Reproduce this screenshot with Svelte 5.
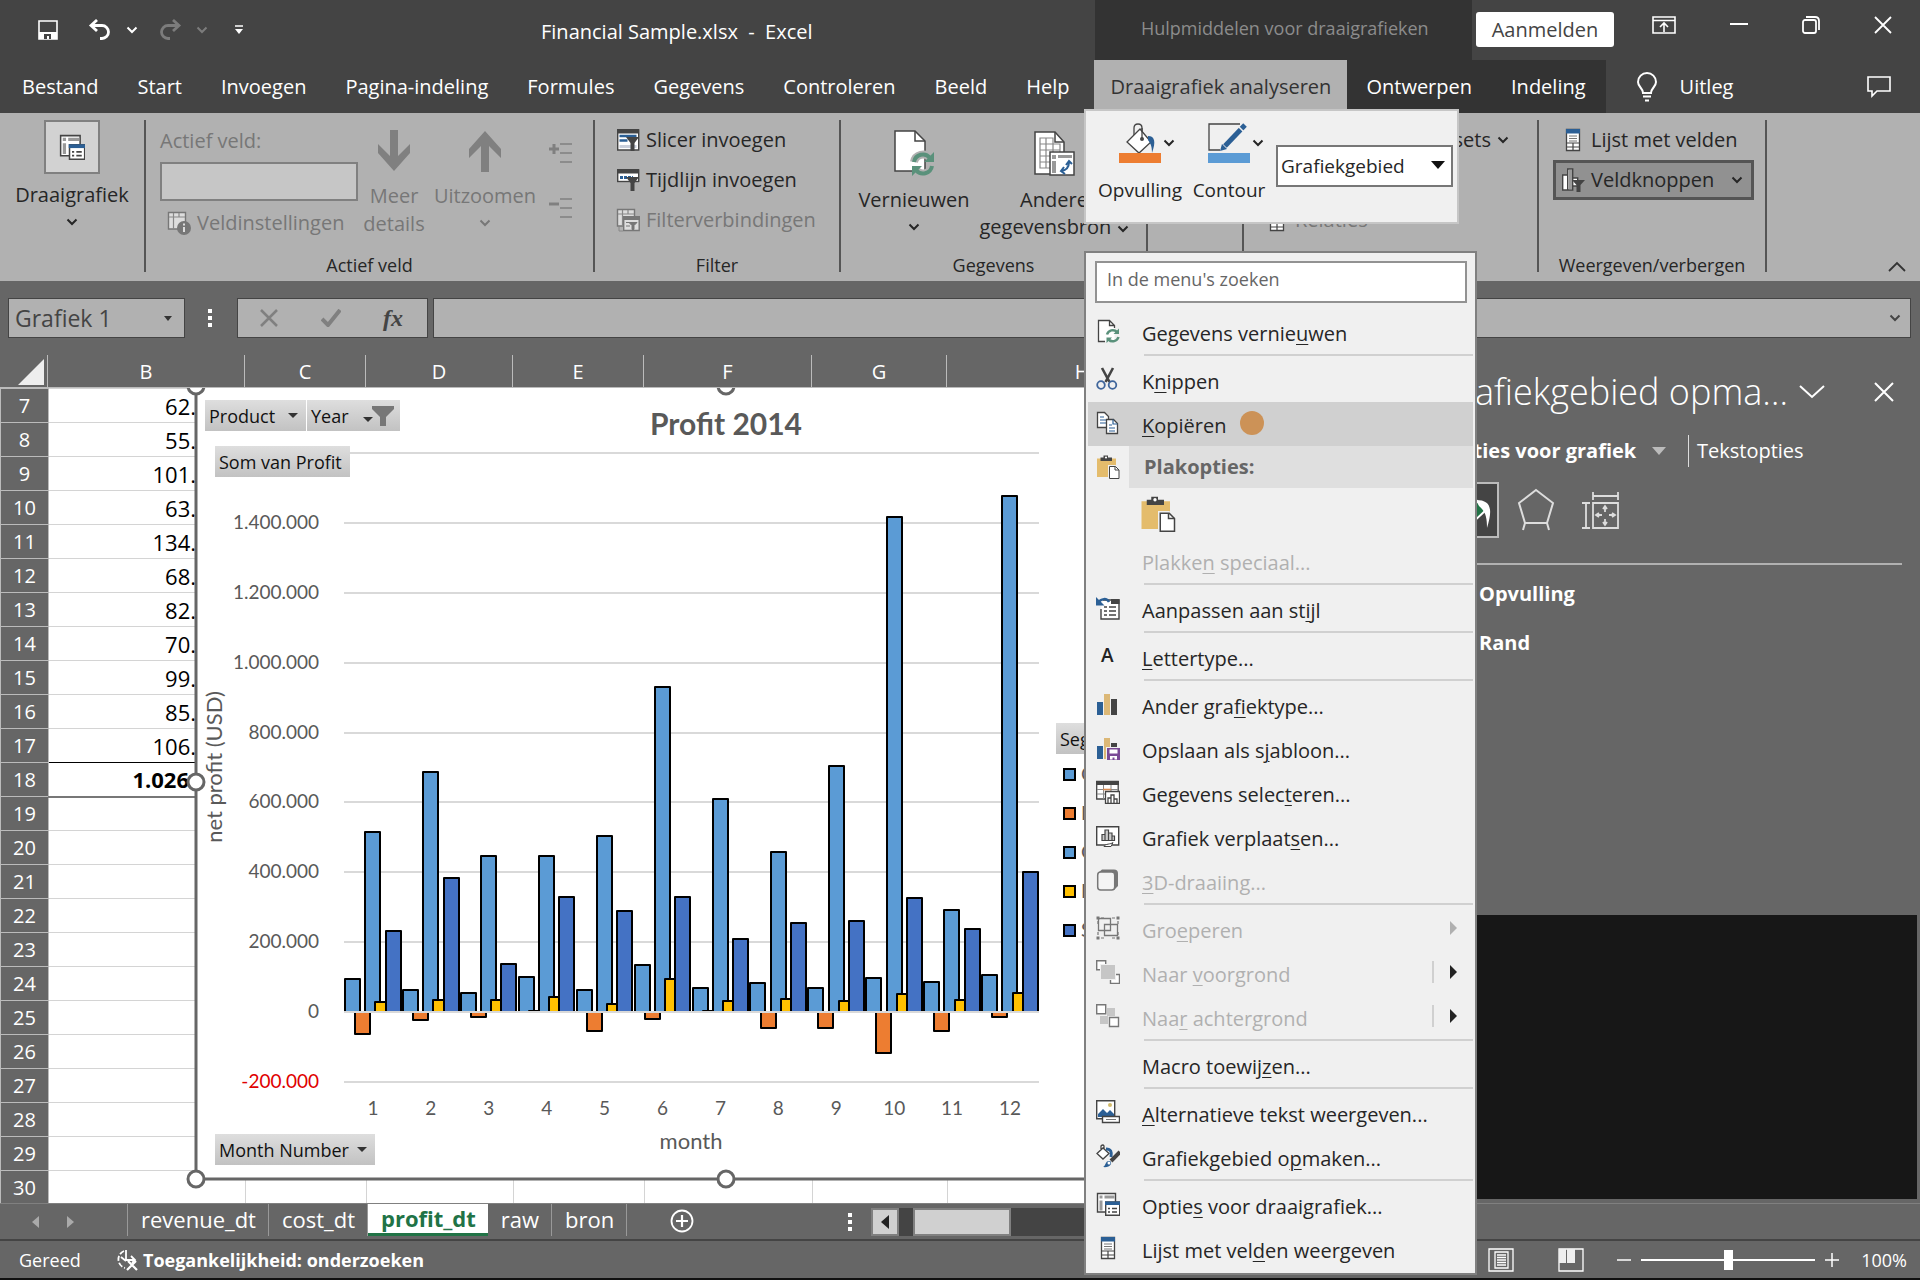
<script>
    let search = $state('');
    let target = $state('Grafiekgebied');
    let nameBox = $state('Grafiek 1');
    let formula = $state('');
    let activeField = $state('');
    let zoom = $state(50);

    const tabs = ['Bestand', 'Start', 'Invoegen', 'Pagina-indeling', 'Formules', 'Gegevens', 'Controleren', 'Beeld', 'Help'];

    const columns = [
        { name: 'B', width: 197 },
        { name: 'C', width: 121 },
        { name: 'D', width: 147 },
        { name: 'E', width: 131 },
        { name: 'F', width: 168 },
        { name: 'G', width: 135 },
        { name: 'H', width: 271 }
    ];

    const cells = { 7: '62.', 8: '55.', 9: '101.', 10: '63.', 11: '134.', 12: '68.', 13: '82.', 14: '70.', 15: '99.', 16: '85.', 17: '106.', 18: '1.026' };
    const rows = Array.from({ length: 24 }, (_, i) => i + 7);

    // values in thousands, one entry per month
    const series = [
        { name: 'Channel Partners', color: '#5b9bd5', values: [94, 63, 54, 100, 63, 134, 69, 82, 69, 96, 86, 105] },
        { name: 'Enterprise', color: '#ed7d31', values: [-63, -24, -13, 3, -53, -19, 3, -47, -47, -116, -53, -15] },
        { name: 'Government', color: '#5b9bd5', values: [515, 687, 448, 448, 504, 930, 609, 458, 704, 1416, 292, 1476] },
        { name: 'Midmarket', color: '#ffc000', values: [28, 34, 34, 42, 22, 94, 31, 36, 31, 51, 34, 54] },
        { name: 'Small Business', color: '#4472c4', values: [231, 383, 136, 329, 288, 329, 209, 254, 260, 325, 237, 402] }
    ];
    const months = Array.from({ length: 12 }, (_, i) => i);
    const ticks = [1600, 1400, 1200, 1000, 800, 600, 400, 200, 0, -200];
    const plot = { left: 160, right: 855, zero: 624 };
    const step = (plot.right - plot.left) / 12;

    const yFor = (value) => Math.round(plot.zero - value * 0.3493);
    const barX = (month, index) => Math.round(plot.left + 1 + month * step + index * 10.15);
    const barY = (value) => Math.min(yFor(value), plot.zero);
    const barHeight = (value) => Math.max(1, Math.abs(yFor(value) - plot.zero));

    function tickLabel(value) {
        if (value === 0) return '0';
        if (Math.abs(value) < 1000) return value + '.000';
        return '1.' + String(value - 1000).padStart(3, '0') + '.000';
    }

    // label parts: text before, access key, text after
    const menu = [
        { icon: 'refresh', label: ['Gegevens vernie', 'u', 'wen'], line: true },
        { icon: 'cut', label: ['K', 'n', 'ippen'] },
        { icon: 'copy', label: ['', 'K', 'opiëren'], active: true },
        { header: 'Plakopties:' },
        { paste: true },
        { label: ['Plakke', 'n', ' speciaal...'], disabled: true, line: true },
        { icon: 'reset', label: ['Aanpassen aan st', 'i', 'jl'], line: true },
        { icon: 'font', label: ['', 'L', 'ettertype...'], line: true },
        { icon: 'bars', label: ['Ander gra', 'f', 'iektype...'] },
        { icon: 'template', label: ['Opslaan als s', 'j', 'abloon...'] },
        { icon: 'select', label: ['Gegevens selec', 't', 'eren...'] },
        { icon: 'move', label: ['Grafiek verplaat', 's', 'en...'] },
        { icon: 'cube', label: ['', '3', 'D-draaiing...'], disabled: true, line: true },
        { icon: 'group', label: ['Gro', 'e', 'peren'], disabled: true, arrow: 'grey' },
        { icon: 'front', label: ['Naar ', 'v', 'oorgrond'], disabled: true, arrow: 'split' },
        { icon: 'back', label: ['Naa', 'r', ' achtergrond'], disabled: true, arrow: 'split', line: true },
        { label: ['Macro toewij', 'z', 'en...'], line: true },
        { icon: 'alt', label: ['', 'A', 'lternatieve tekst weergeven...'] },
        { icon: 'format', label: ['Grafiekgebied o', 'p', 'maken...'], line: true },
        { icon: 'options', label: ['Optie', 's', ' voor draaigrafiek...'] },
        { icon: 'fields', label: ['Lijst met vel', 'd', 'en weergeven'] }
    ];
</script>

{#snippet chevron()}
    <svg class="chevron" width="12" height="8" viewBox="0 0 12 8"><path d="M1.5 1.5 6 6l4.5-4.5" fill="none" stroke="currentColor" stroke-width="2" /></svg>
{/snippet}

{#snippet icon(name, size = 24)}
    <svg width={size} height={size} viewBox="0 0 24 24" fill="none" aria-hidden="true">
        {#if name === 'refresh'}
            <path d="M2.500 1.500h11l5 5V22.500h-16z" fill="#fff" />
            <path d="M9 22.500H2.500v-21h11l5 5V9M13.500 1.500v5h5" stroke="#444" stroke-width="1.300" />
            <path d="M11 15.500a6 6 0 0 1 10-2.500M22.500 18a6 6 0 0 1-10 2.500" stroke="#5a917b" stroke-width="2.500" />
            <path d="M23 9.500V15h-5.500zM10.500 24v-5.500H16z" fill="#5a917b" />
        {:else if name === 'cut'}
            <path d="M6 1l7.500 14M17 1 9.500 15" stroke="#444" stroke-width="2.600" />
            <circle cx="5" cy="18" r="3.800" stroke="#3f659b" stroke-width="1.800" />
            <circle cx="16.500" cy="18" r="3.800" stroke="#3f659b" stroke-width="1.800" />
        {:else if name === 'copy'}
            <path d="M1.500 1.500h7l4 4v11h-11z" fill="#fff" stroke="#444" stroke-width="1.300" />
            <path d="M4 6h4M4 9h6M4 12h6" stroke="#2b5f95" stroke-width="1.200" />
            <path d="M10.500 8.500h7l4 4v10h-11z" fill="#fff" stroke="#444" stroke-width="1.300" />
            <path d="M17 8.500V13h4.500M13 14h3M13 17h6M13 20h6" stroke="#2b5f95" stroke-width="1.200" />
        {:else if name === 'paste'}
            <path d="M1 3.500h19V22H1z" fill="#e4bc6c" />
            <path d="M4.500 2.500h3V.5h4.500v2h4V6H4.500z" fill="#444" />
            <circle cx="10" cy="2.500" r="1.100" fill="#fff" />
            <path d="M12 10h7.500l4 4v10H12z" fill="#f0f0f0" />
            <path d="M13.500 11.500h6l3.500 3.500v8.500h-9.500z" fill="#fff" stroke="#444" stroke-width="1" />
            <path d="M19 11.500V15h4" stroke="#444" stroke-width="1" />
        {:else if name === 'reset'}
            <path d="M7 4h16v19H5V13" fill="#fff" stroke="#444" stroke-width="1.400" />
            <path d="M15 3h8.500v5H15z" fill="#444" />
            <path d="M13 6C11 2 5 2 2 7" stroke="#2b5f95" stroke-width="2.500" />
            <path d="M0 1v8.500h8.500z" fill="#2b5f95" />
            <path d="M8 11h3M8 15h3M8 19h3M13 11h7M13 15h7M13 19h7" stroke="#444" stroke-width="1.600" />
        {:else if name === 'font'}
            <text x="5" y="18" font-family="Open Sans, sans-serif" font-size="19" font-weight="600" fill="#222">A</text>
        {:else if name === 'bars' || name === 'template'}
            <path d="M1 10h6v13H1z" fill="#2b5f95" />
            <path d="M8 2h6v21H8z" fill="#dcb877" />
            <path d="M15 7h6v16h-6z" fill="#444" />
            {#if name === 'template'}
                <path d="M10 11h14v13H10z" fill="#f0f0f0" />
                <path d="M11 12h13v12H11z" fill="#7a4a96" />
                <path d="M13.500 13.500h8v4h-8zM14 20h7v3.500h-2.500v-2h-2v2H14z" fill="#fff" />
            {/if}
        {:else if name === 'select'}
            <path d="M.7 1.500h21.500V19H.7z" fill="#fff" stroke="#444" stroke-width="1.300" />
            <path d="M0 1h23v4H0z" fill="#444" />
            <path d="M1 9.500h21M1 14h21M7.500 5v14M15 5v14" stroke="#888" stroke-width="1" />
            <path d="M7 9.500h8" stroke="#d98a50" stroke-width="1.600" />
            <path d="M9.500 11.500h14v12h-14z" fill="#fff" stroke="#444" stroke-width="1.300" />
            <path d="M12 23v-5h3v5M15 23v-8h3v8M18 23v-4h3v4" stroke="#444" stroke-width="1.300" />
        {:else if name === 'move'}
            <path d="M.7 2.700h22V21H.7z" fill="#fff" stroke="#444" stroke-width="1.400" />
            <path d="M6 16.500v-6h3v6zM9 16.500V6h3.500v10.500zM12.500 16.500V9H16v7.500zM16 16.500V12h2.500v4.500z" fill="#ccc" stroke="#444" stroke-width="1.200" />
            <path d="M8 22.500c1-3 7-2 9-4l-2 4z" fill="#fff" stroke="#444" />
        {:else if name === 'cube'}
            <path d="M2 5 6 1.500h12q4 0 4 4V18l-4 4" fill="#777" />
            <rect x="1.700" y="4" width="17" height="18" rx="3" fill="#f4f4f4" stroke="#777" stroke-width="1.500" />
        {:else if name === 'group'}
            <path d="M5 2h3M16 2h3M5 22h3M16 22h3M2 5v3M2 16v3M22 5v3M22 16v3" stroke="#777" stroke-width="1.200" />
            <path d="M.5.500h3v3h-3zM20.500.500h3v3h-3zM.5 20.500h3v3h-3zM20.500 20.500h3v3h-3z" fill="#777" />
            <path d="M2.500 2.500h12v12h-12zM8.500 8.500h13v11h-13z" stroke="#777" stroke-width="1.300" />
        {:else if name === 'front'}
            <path d="M.7.700h9v9h-9zM14.500 14.500h9v9h-9z" fill="#fff" stroke="#777" stroke-width="1.400" />
            <path d="M4 4h16v16H4z" fill="#f0f0f0" />
            <path d="M5 5h14v14H5z" fill="#c6c6c6" />
        {:else if name === 'back'}
            <path d="M11 4h8v8h-8zM4 12h8v8H4z" fill="#c6c6c6" />
            <path d="M.7.700h9v9h-9zM13.500 13.500h9v9h-9z" fill="#fff" stroke="#777" stroke-width="1.400" />
        {:else if name === 'alt'}
            <path d="M.7.700h18v18h-18z" fill="#fff" stroke="#444" stroke-width="1.400" />
            <circle cx="14" cy="5" r="2" fill="#d2bb6a" />
            <path d="M2 17v-3l5-5 4 4 3-3 4 4v3z" fill="#2b5f95" />
            <path d="M6.500 16.500h17v6h-17z" fill="#fff" stroke="#444" stroke-width="1.400" />
            <path d="M10 19.500h10" stroke="#777" />
        {:else if name === 'format'}
            <path d="M5 6V2q2-2 3 0v4M1 9.500 7 4l6 5.500L7 15z" fill="#fff" stroke="#444" stroke-width="1.300" />
            <path d="M10 5c5 0 6 3 5 8" stroke="#2b5f95" stroke-width="3" />
            <path d="M24 8 15 17" stroke="#444" stroke-width="4" />
            <path d="M7 23c3-1 2-7 7-6 3 2 0 7-7 6z" fill="#2b5f95" />
            <circle cx="13" cy="19" r="1.500" fill="#fff" />
        {:else if name === 'options'}
            <path d="M1.500 1.500h18V20h-18z" fill="#fff" stroke="#444" stroke-width="1.400" />
            <path d="M3.500 3.500h3v3h-3zM8.500 3.500h10v3h-10zM3.500 8.500h3v10h-3z" fill="#999" />
            <path d="M9.700 10h14v13.300h-14z" fill="#fff" stroke="#444" stroke-width="1.400" />
            <path d="M9 9.500h15V13H9z" fill="#2b5f95" />
            <path d="M12 16.500h2M12 20h2M16 16.500h5M16 20h5" stroke="#444" stroke-width="1.500" />
        {:else if name === 'fields'}
            <path d="M5.500 1.500h13v21h-13z" fill="#fff" stroke="#444" stroke-width="1.300" />
            <path d="M5 1h14v4.500H5z" fill="#2b5f95" />
            <path d="M8 8h8M8 10.500h8M8 13h8" stroke="#777" stroke-width="1" />
            <path d="M5.500 15h13M5.500 19h13M12 15v7.500" stroke="#444" stroke-width="1.200" />
        {:else if name === 'slicer' || name === 'timeline'}
            <path d="M1.700 2h21v20h-21z" fill="#fff" stroke="#444" stroke-width="1.400" />
            <path d="M1 1h22v4.500H1z" fill="#444" />
            {#if name === 'slicer'}
                <path d="M3.500 8h17M3.500 12.500h8" stroke="#2b5f95" stroke-width="2.500" />
                <path d="M3.500 18.500h17" stroke="#c9cfdb" stroke-width="3" />
            {:else}
                <path d="M0 14h24v10H0z" fill="#b1b1b1" />
                <path d="M1 13.500h22" stroke="#444" stroke-width="1.400" />
                <path d="M4 9.500h13" stroke="#2b5f95" stroke-width="3" stroke-dasharray="3 1" />
            {/if}
            <path d="M10 9h13l-4.500 6v8H14.500v-8z" fill="#444" />
        {:else if name === 'filterlinks' || name === 'fieldinfo'}
            <path d="M1.500 1.500h17V18h-17z" fill="#ddd" stroke="#777" stroke-width="1.400" />
            <path d="M2 6h16M6.500 2v16M12 2v4" stroke="#888" stroke-width="1.200" />
            {#if name === 'fieldinfo'}
                <circle cx="17" cy="17" r="7" fill="#777" />
                <path d="M17 16v5M17 12.500v2" stroke="#ddd" stroke-width="2" />
            {:else}
                <path d="M7.700 9h15.500v13.500H7.700z" fill="#ddd" stroke="#777" stroke-width="1.400" />
                <path d="M7 8h17v4H7z" fill="#777" />
                <path d="M10 14.500h11M10 18h4M13 14.500h8l-3 3v4h-2v-4z" stroke="#777" fill="#777" />
                <path d="M3 19v4h4" stroke="#888" />
            {/if}
        {:else if name === 'fieldbuttons'}
            <path d="M1.700 7h5v15h-5zM6.700 1h5v21h-5zM11.700 10h5v8h-5z" fill="#fff" stroke="#444" stroke-width="1.400" />
            <path d="M7.500 2h3.500v19H7.500z" fill="#999" />
            <path d="M11 12h13l-4.500 5v7h-4v-7z" fill="#444" />
        {/if}
    </svg>
{/snippet}

{#snippet bucket()}
    <path d="M10 14V5q0-4 4-4t4 4v11" fill="none" stroke="#444" stroke-width="1.300" />
    <path d="M3 19 16 6l11 13-12 11z" fill="#fff" stroke="#444" stroke-width="1.300" />
    <path d="M18 5v10" stroke="#444" stroke-width="1.300" />
    <circle cx="18" cy="16" r="2" fill="#444" />
    <path d="M24 13c7 0 8 6 4 17 0-6-1-9-4-13z" fill="#2b5f95" />
{/snippet}

<div class="excel">
    <header class="titlebar">
        <div class="quick">
            <button class="save" aria-label="Opslaan">
                <svg width="20" height="20" viewBox="0 0 20 20"><path d="M1 1h18v18H1z" fill="none" stroke="#fff" stroke-width="1.600" /><path d="M1 12h18v7H1z" fill="#fff" /><path d="M6 14h7v5H6z" fill="#444" /><path d="M9 16h2v3H9z" fill="#fff" /></svg>
            </button>
            <button class="undo" aria-label="Ongedaan maken">
                <svg width="24" height="22" viewBox="0 0 24 22"><path d="M3 6.500h11a6 6 0 0 1 0 13h-2M9 1 3 6.500 9 12" fill="none" stroke="#fff" stroke-width="2.800" /></svg>
                {@render chevron()}
            </button>
            <button class="undo dim" aria-label="Opnieuw">
                <svg width="24" height="22" viewBox="0 0 24 22"><path d="M21 6.500H10a6 6 0 0 0 0 13h2M15 1l6 5.500-6 5.500" fill="none" stroke="currentColor" stroke-width="2.800" /></svg>
                {@render chevron()}
            </button>
            <button aria-label="Werkbalk aanpassen">
                <svg width="10" height="10" viewBox="0 0 10 10"><path d="M1 1h8" stroke="#fff" stroke-width="1.500" /><path d="M1 4h8L5 9z" fill="#fff" /></svg>
            </button>
        </div>
        <div class="filename">Financial Sample.xlsx&nbsp; - &nbsp;Excel</div>
        <div class="context-title">Hulpmiddelen voor draaigrafieken</div>
        <button class="signin">Aanmelden</button>
        <div class="window">
            <button aria-label="Weergaveopties"><svg width="24" height="18" viewBox="0 0 24 18" fill="none" stroke="#fff" stroke-width="1.600"><path d="M1 1h22v16H1zM1 4.500h22M12 16V7M8 11l4-4 4 4" /></svg></button>
            <button aria-label="Minimaliseren"><svg width="18" height="18" viewBox="0 0 18 18"><path d="M0 8h18" stroke="#fff" stroke-width="2" /></svg></button>
            <button aria-label="Verkleinen"><svg width="18" height="18" viewBox="0 0 18 18" fill="none" stroke="#fff" stroke-width="1.800"><rect x="1" y="4" width="13" height="13" rx="2" /><path d="M4 1h9q4 0 4 4v9" /></svg></button>
            <button aria-label="Sluiten"><svg width="18" height="18" viewBox="0 0 18 18" stroke="#fff" stroke-width="1.800"><path d="M1 1l16 16M17 1 1 17" /></svg></button>
        </div>
    </header>

    <nav class="tabs">
        {#each tabs as tab}
            <button>{tab}</button>
        {/each}
        <div class="context-tabs">
            <button class="current">Draaigrafiek analyseren</button>
            <button>Ontwerpen</button>
            <button>Indeling</button>
        </div>
        <button class="tell">
            <svg width="22" height="30" viewBox="0 0 22 30" fill="none" stroke="#fff" stroke-width="2"><path d="M7 21c0-5-5-6-5-11a9 9 0 0 1 18 0c0 5-5 6-5 11zM7 24.500h8M9 28.500h4" /></svg>
            Uitleg
        </button>
        <button class="comments" aria-label="Opmerkingen">
            <svg width="24" height="22" viewBox="0 0 24 22" fill="none" stroke="#fff" stroke-width="1.600"><path d="M1 1h22v14H10l-5 5v-5H1z" /></svg>
        </button>
    </nav>

    <section class="ribbon">
        <div class="group g-pivot">
            <button class="big">
                <span class="framed">{@render icon('options', 26)}</span>
                Draaigrafiek
                {@render chevron()}
            </button>
        </div>
        <div class="group g-field off">
            <div class="content">
                <div class="field">
                    <label for="active-field">Actief veld:</label>
                    <input id="active-field" bind:value={activeField} />
                    <button class="small">{@render icon('fieldinfo')}Veldinstellingen</button>
                </div>
                <button class="big more">
                    <svg width="34" height="42" viewBox="0 0 34 42"><path d="M13 0h8v26l12-12v9L17 41 1 23v-9l12 12z" fill="#808080" /></svg>
                    <span>Meer<br />details</span>
                </button>
                <button class="big out">
                    <svg width="34" height="42" viewBox="0 0 34 42"><path d="M13 42h8V16l12 12v-9L17 1 1 19v9l12-12z" fill="#808080" /></svg>
                    <span>Uitzoomen</span>
                    {@render chevron()}
                </button>
                <div class="levels">
                    <button aria-label="Uitvouwen"><svg width="24" height="22" viewBox="0 0 24 22" stroke="#808080"><path d="M0 7h10M5 2v10" stroke-width="3" /><path d="M11 2h12M11 11h12M11 20h12" stroke-width="1.500" /></svg></button>
                    <button aria-label="Samenvouwen"><svg width="24" height="22" viewBox="0 0 24 22" stroke="#808080"><path d="M0 7h10" stroke-width="3" /><path d="M11 2h12M11 11h12M11 20h12" stroke-width="1.500" /></svg></button>
                </div>
            </div>
            <h2>Actief veld</h2>
        </div>
        <div class="group g-filter">
            <div class="content stack">
                <button class="small">{@render icon('slicer')}Slicer invoegen</button>
                <button class="small">{@render icon('timeline')}Tijdlijn invoegen</button>
                <button class="small off">{@render icon('filterlinks')}Filterverbindingen</button>
            </div>
            <h2>Filter</h2>
        </div>
        <div class="group g-data">
            <div class="content">
                <button class="big">
                    <svg width="42" height="46" viewBox="0 0 42 46" fill="none"><path d="M2 1h20l10 10v30H2z" fill="#fff" stroke="#444" stroke-width="1.500" /><path d="M22 1v10h10" stroke="#444" stroke-width="1.500" /><path d="M21 32a9 9 0 0 1 16-4M39 36a9 9 0 0 1-16 4" stroke="#b1b1b1" stroke-width="8" /><path d="M21 32a9 9 0 0 1 16-4M39 36a9 9 0 0 1-16 4" stroke="#5a917b" stroke-width="4" /><path d="M41 22v10H31zM19 46V36h10z" fill="#5a917b" /></svg>
                    <span>Vernieuwen</span>
                    {@render chevron()}
                </button>
                <button class="big source">
                    <svg width="42" height="46" viewBox="0 0 42 46" fill="none"><path d="M2 2h20l9 10v32H2z" fill="#fff" stroke="#444" stroke-width="1.500" /><path d="M22 2v10h9" stroke="#444" stroke-width="1.500" /><path d="M7 8h13v6h7v24H7zM7 14h20M7 20h20M7 26h20M7 32h20M13 8v30M20 14v24" stroke="#888" stroke-width="1.200" /><path d="M17 22h24v23H17z" fill="#fff" stroke="#444" stroke-width="1.500" /><path d="M19 25h4v4h-4zM25 25h14v3H25zM19 31h4v12h-4z" fill="#999" /><path d="M28 41q8-1 8-9M31 37l-3 4 4 3M33 35l3-4 3 3" stroke="#2b5f95" stroke-width="2" /></svg>
                    <span>Andere<br />gegevensbron {@render chevron()}</span>
                </button>
            </div>
            <h2>Gegevens</h2>
        </div>
        <div class="group g-actions"></div>
        <div class="group g-calc">
            <div class="content stack">
                <button class="small">Velden, items en sets {@render chevron()}</button>
                <button class="small off relations">{@render icon('fields')}Relaties</button>
            </div>
        </div>
        <div class="group g-show">
            <div class="content stack">
                <button class="small">{@render icon('fields')}Lijst met velden</button>
                <button class="small pressed">{@render icon('fieldbuttons')}<span>Veldknoppen</span>{@render chevron()}</button>
            </div>
            <h2>Weergeven/verbergen</h2>
        </div>
        <button class="collapse" aria-label="Lint samenvouwen">
            <svg width="18" height="11" viewBox="0 0 18 11"><path d="M1 10 9 2l8 8" fill="none" stroke="#333" stroke-width="1.800" /></svg>
        </button>
    </section>

    <div class="formula-bar">
        <div class="name-box">
            <input aria-label="Naamvak" bind:value={nameBox} />
            <svg width="8" height="5" viewBox="0 0 8 5"><path d="M0 0h8L4 5z" fill="#333" /></svg>
        </div>
        <svg class="dots" width="4" height="18" viewBox="0 0 4 18"><path d="M0 0h4v4H0zM0 7h4v4H0zM0 14h4v4H0z" fill="#fff" /></svg>
        <div class="formula-tools">
            <button aria-label="Annuleren"><svg width="18" height="18" viewBox="0 0 18 18"><path d="M1 1l16 16M17 1 1 17" stroke="#808080" stroke-width="2.500" /></svg></button>
            <button aria-label="Invoeren"><svg width="20" height="18" viewBox="0 0 20 18"><path d="M1 10l6 6L19 1" fill="none" stroke="#808080" stroke-width="4" /></svg></button>
            <button class="fx">fx</button>
        </div>
        <div class="formula">
            <input aria-label="Formule" bind:value={formula} />
            {@render chevron()}
        </div>
    </div>

    <main>
        <div class="sheet">
            <div class="column-heads">
                <div class="corner"><svg width="26" height="26" viewBox="0 0 26 26"><path d="M26 0v26H0z" fill="#eee" /></svg></div>
                {#each columns as column}
                    <div class="column-head" style="width: {column.width}px">{column.name}</div>
                {/each}
            </div>
            <div class="cells">
                <table>
                    <colgroup>
                        <col class="row-col" />
                        {#each columns as column}
                            <col style="width: {column.width}px" />
                        {/each}
                    </colgroup>
                    <tbody>
                        {#each rows as row}
                            <tr class:last={row === 17} class:total={row === 18}>
                                <th scope="row">{row}</th>
                                {#each columns as column}
                                    <td>{column.name === 'B' ? (cells[row] ?? '') : ''}</td>
                                {/each}
                            </tr>
                        {/each}
                    </tbody>
                </table>

                <div class="chart">
                    <svg width="1110" height="815" viewBox="0 0 1110 815">
                        <path d="M12-2h1120v793H12z" fill="#fff" stroke="#666" stroke-width="3" />
                        {#each ticks as tick}
                            <path d="M{plot.left} {yFor(tick)}H{plot.right}" stroke="#d9d9d9" stroke-width="2" />
                            {#if tick < 1600}
                                <text class="tick" class:negative={tick < 0} x="135" y={yFor(tick) + 6} text-anchor="end">{tickLabel(tick)}</text>
                            {/if}
                        {/each}
                        {#each months as month}
                            {#each series as item, index}
                                <rect x={barX(month, index)} y={barY(item.values[month])} width="15" height={barHeight(item.values[month])} fill={item.color} stroke="#000" stroke-width="2" stroke-linejoin="round" />
                            {/each}
                            <text class="tick" x={plot.left + step * (month + 0.5)} y="727" text-anchor="middle">{month + 1}</text>
                        {/each}
                        <path d="M{plot.left} {plot.zero}H{plot.right}" stroke="#d9d9d9" stroke-width="2" />
                        <text class="chart-title" x="542" y="47" text-anchor="middle">Profit 2014</text>
                        <text class="axis" x="507" y="761" text-anchor="middle">month</text>
                        <text class="axis" transform="translate(38 379) rotate(-90)" text-anchor="middle">net profit (USD)</text>
                        {#each series as item, index}
                            <rect x="880" y={381 + index * 39} width="11" height="11" fill={item.color} stroke="#000" stroke-width="2" />
                            <text class="tick" x="897" y={393 + index * 39}>{item.name}</text>
                        {/each}
                        {#each [[12, -2], [542, -2], [12, 394], [12, 791], [542, 791]] as [x, y]}
                            <circle cx={x} cy={y} r="8" fill="#fff" stroke="#666" stroke-width="3" />
                        {/each}
                    </svg>
                    <button class="pill product">Product <i class="caret"></i></button>
                    <button class="pill year">Year <i class="caret"></i><svg width="22" height="20" viewBox="0 0 22 20"><path d="M0 0h22v3l-8 8v9H8v-9L0 3z" fill="#777" /></svg></button>
                    <button class="pill profit">Som van Profit</button>
                    <button class="pill month">Month Number <i class="caret"></i></button>
                    <button class="pill segment">Segment <i class="caret"></i></button>
                </div>
            </div>
        </div>

        <aside>
            <div class="pane-title">
                <h1>Grafiekgebied opmaken</h1>
                <button aria-label="Taakvensteropties"><svg width="26" height="14" viewBox="0 0 26 14"><path d="M1 1l12 11L25 1" fill="none" stroke="#fff" stroke-width="2" /></svg></button>
                <button aria-label="Venster sluiten"><svg width="20" height="20" viewBox="0 0 20 20"><path d="M1 1l18 18M19 1 1 19" stroke="#fff" stroke-width="2" /></svg></button>
            </div>
            <div class="pane-tabs">
                <button class="chosen">Opties voor grafiek <svg width="14" height="8" viewBox="0 0 14 8"><path d="M0 0h14L7 8z" fill="#bbb" /></svg></button>
                <button>Tekstopties</button>
            </div>
            <div class="pane-icons">
                <button class="selected" aria-label="Opvulling en lijn"><svg width="50" height="50" viewBox="0 0 50 50"><path d="M4 26 22 8l17 17-17 16z" fill="#217346" stroke="#fff" stroke-width="2" /><path d="M29 15c15 0 17 9 11 28 0-10-1-16-8-22z" fill="#fff" /></svg></button>
                <button aria-label="Effecten"><svg width="38" height="44" viewBox="0 0 38 44" fill="none" stroke="#ddd" stroke-width="2"><path d="M19 2 36 15l-6 20H8L2 15zM8 35l-2 7M30 35l2 7" /></svg></button>
                <button aria-label="Grootte en eigenschappen"><svg width="38" height="38" viewBox="0 0 38 38" fill="none" stroke="#ddd" stroke-width="1.800"><path d="M12 12h25v25H12zM12 1v8M37 1v8M12 5h25M1 12h8M1 37h8M5 12v25" /><path d="M24 15v6M24 28v6M15 24h6M28 24h6M22 18l2-3 2 3M22 31l2 3 2-3M18 22l-3 2 3 2M31 22l3 2-3 2" /></svg></button>
            </div>
            <button class="section">Opvulling</button>
            <button class="section">Rand</button>
            <div class="blank"></div>
        </aside>
    </main>

    <div class="sheet-tabs">
        <div class="arrows">
            <button aria-label="Vorige"><svg width="7" height="12" viewBox="0 0 7 12"><path d="M7 0v12L0 6z" fill="#aaa" /></svg></button>
            <button aria-label="Volgende"><svg width="7" height="12" viewBox="0 0 7 12"><path d="M0 0v12l7-6z" fill="#aaa" /></svg></button>
        </div>
        <button class="sheet-tab first">revenue_dt</button>
        <button class="sheet-tab">cost_dt</button>
        <button class="sheet-tab open">profit_dt</button>
        <button class="sheet-tab">raw</button>
        <button class="sheet-tab">bron</button>
        <button class="add" aria-label="Nieuw blad"><svg width="24" height="24" viewBox="0 0 24 24" fill="none" stroke="#fff" stroke-width="1.800"><circle cx="12" cy="12" r="10.500" /><path d="M12 6v12M6 12h12" stroke-width="2.200" /></svg></button>
        <svg class="dots" width="4" height="18" viewBox="0 0 4 18"><path d="M0 0h4v4H0zM0 7h4v4H0zM0 14h4v4H0z" fill="#fff" /></svg>
        <div class="scrollbar">
            <button aria-label="Naar links"><svg width="8" height="14" viewBox="0 0 8 14"><path d="M8 0v14L0 7z" fill="#222" /></svg></button>
            <div class="thumb"></div>
        </div>
    </div>

    <footer>
        <span class="ready">Gereed</span>
        <svg width="22" height="22" viewBox="0 0 22 22" fill="none" stroke="#fff"><path d="M8 2a9 9 0 0 0 1 17" stroke-width="1.800" stroke-dasharray="5 2" /><path d="M10 1v10h9M15 7l4 4-3 3M5 8l5 4" stroke-width="1.800" /><path d="M12 12l9 9M20 12l-9 9" stroke-width="2.200" /></svg>
        <b>Toegankelijkheid: onderzoeken</b>
        <div class="views">
            <button aria-label="Pagina-indeling"><svg width="26" height="24" viewBox="0 0 26 24" fill="none" stroke="#fff" stroke-width="1.300"><path d="M1 1h24v22H1zM7 4h13v16H7zM9 7h9M9 9.500h9M9 12h9M9 14.500h9M9 17h9" /></svg></button>
            <button aria-label="Pagina-eindevoorbeeld"><svg width="26" height="24" viewBox="0 0 26 24" fill="none"><path d="M1 1h24v22H1z" stroke="#fff" stroke-width="1.300" /><path d="M1 1h7v14H1zM9 1h8v14H9z" fill="#eee" /></svg></button>
            <button class="step" aria-label="Uitzoomen"><svg width="14" height="14" viewBox="0 0 14 14"><path d="M0 7h14" stroke="#fff" stroke-width="1.500" /></svg></button>
            <input type="range" aria-label="Zoomen" bind:value={zoom} min="0" max="100" />
            <button class="step" aria-label="Inzoomen"><svg width="14" height="14" viewBox="0 0 14 14"><path d="M0 7h14M7 0v14" stroke="#fff" stroke-width="1.500" /></svg></button>
            <span class="percent">100%</span>
        </div>
    </footer>

    <div class="mini-toolbar">
        <button>
            <span class="tool">
                <svg width="42" height="40" viewBox="0 0 42 40"><g transform="translate(5)">{@render bucket()}</g><path d="M0 30h42v10H0z" fill="#ed7d31" /></svg>
                {@render chevron()}
            </span>
            Opvulling
        </button>
        <button>
            <span class="tool">
                <svg width="42" height="40" viewBox="0 0 42 40"><path d="M32 1H1v26h11" fill="none" stroke="#444" stroke-width="1.300" /><path d="M37 2 17 23" stroke="#2b5f95" stroke-width="5" /><path d="M14 21l5 5-7 2z" fill="#2b5f95" /><path d="M31 4l5 5" stroke="#f0f0f0" stroke-width="1.500" /><path d="M0 30h42v10H0z" fill="#5b9bd5" /></svg>
                {@render chevron()}
            </span>
            Contour
        </button>
        <div class="picker">
            <select aria-label="Grafiekelement" bind:value={target}>
                <option>Grafiekgebied</option>
                <option>Tekengebied</option>
            </select>
            <svg width="14" height="8" viewBox="0 0 14 8"><path d="M0 0h14L7 8z" fill="#111" /></svg>
        </div>
    </div>

    <div class="context-menu" role="menu">
        <input aria-label="In de menu's zoeken" placeholder="In de menu's zoeken" bind:value={search} />
        {#each menu as item}
            {#if item.header}
                <div class="menu-header">
                    {@render icon('paste')}
                    <b>{item.header}</b>
                </div>
            {:else if item.paste}
                <button class="paste" aria-label="Plakken">{@render icon('paste', 36)}</button>
            {:else}
                <button class="item" class:active={item.active} disabled={item.disabled} role="menuitem">
                    <span class="item-icon">{#if item.icon}{@render icon(item.icon)}{/if}</span>
                    <span>{item.label[0]}<u>{item.label[1]}</u>{item.label[2]}</span>
                    {#if item.active}<i class="pointer"></i>{/if}
                    {#if item.arrow}
                        <span class="submenu {item.arrow}"><svg width="7" height="14" viewBox="0 0 7 14"><path d="M0 0v14l7-7z" fill="currentColor" /></svg></span>
                    {/if}
                </button>
                {#if item.line}<hr />{/if}
            {/if}
        {/each}
    </div>
</div>

<style>
    :global(body) {
        margin: 0;
        background: #171717;
    }

    .excel {
        position: relative;
        display: flex;
        flex-direction: column;
        height: 100vh;
        box-sizing: border-box;
        border-bottom: 2px solid #111;
        overflow: hidden;
        background: #666;
        color: #fff;
        font: 20px/28px "Open Sans", "Noto Sans", sans-serif;
    }

    .excel *,
    .excel *::before {
        box-sizing: border-box;
    }

    button,
    input,
    select {
        margin: 0;
        padding: 0;
        border: 0;
        border-radius: 0;
        background: none;
        color: inherit;
        font: inherit;
    }

    button {
        white-space: nowrap;
    }

    svg {
        display: block;
        flex: none;
    }

    h1,
    h2 {
        margin: 0;
        font-weight: 400;
    }

    /* title bar */
    .titlebar {
        display: flex;
        flex: none;
        height: 60px;
        background: #444;
    }

    .quick {
        display: flex;
        align-items: center;
        gap: 20px;
        width: 405px;
        padding-left: 38px;
    }

    .save {
        margin-right: 10px;
    }

    .undo {
        display: flex;
        align-items: center;
        gap: 14px;
    }

    .dim {
        margin-right: 6px;
        color: #7c7c7c;
    }

    .filename {
        flex: 1;
        padding: 18px 0 0 136px;
    }

    .context-title {
        width: 377px;
        padding: 14px 0 0 46px;
        background: #333;
        color: #8c8c8c;
        font-size: 18px;
    }

    .signin {
        align-self: flex-start;
        width: 138px;
        height: 35px;
        margin: 12px 38px 0 4px;
        border-radius: 3px;
        background: #fff;
        color: #444;
    }

    .window {
        display: flex;
        align-items: flex-start;
        gap: 54px;
        padding: 16px 28px 0 0;
    }

    /* ribbon tabs */
    .tabs {
        display: flex;
        flex: none;
        height: 53px;
        padding-left: 3px;
        background: #444;
    }

    .tabs button {
        padding: 0 20px 0 19px;
    }

    .context-tabs {
        display: flex;
        margin-left: 5px;
        background: #333;
    }

    .context-tabs .current {
        width: 253px;
        padding: 0;
        background: #b1b1b1;
        color: #333;
    }

    .tabs .tell {
        display: flex;
        align-items: center;
        gap: 22px;
        padding-left: 30px;
    }

    .tabs .comments {
        margin-left: auto;
        padding-right: 29px;
    }

    /* ribbon */
    .ribbon {
        display: flex;
        flex: none;
        height: 168px;
        padding: 7px 0 9px;
        background: #b1b1b1;
        color: #262626;
    }

    .group {
        display: flex;
        flex-direction: column;
        flex: none;
        border-right: 2px solid #555;
    }

    .content {
        display: flex;
        flex: 1;
    }

    .group h2 {
        height: 24px;
        margin-bottom: -5px;
        color: #262626;
        font-size: 18px;
        line-height: 24px;
        text-align: center;
    }

    .g-pivot { width: 146px; }
    .g-field { width: 449px; }
    .g-filter { width: 246px; }
    .g-data { width: 307px; }
    .g-actions { width: 96px; }
    .g-calc { width: 295px; }
    .g-show { width: 228px; }

    .off {
        color: #777;
    }

    .big {
        display: flex;
        flex-direction: column;
        align-items: center;
        padding-top: 10px;
    }

    .big > span {
        margin-top: 10px;
    }

    .big .chevron {
        margin-top: 9px;
    }

    .g-pivot .big {
        padding-top: 0;
    }

    .big .framed {
        display: grid;
        place-items: center;
        width: 56px;
        height: 54px;
        margin: 0 0 7px;
        border: 2px solid #808080;
        background: #d2d2d2;
    }

    .field {
        width: 212px;
        padding: 7px 0 0 14px;
    }

    .field label {
        display: block;
        height: 35px;
    }

    .field input {
        display: block;
        width: 198px;
        height: 39px;
        border: 2px solid #808080;
        background: #c6c6c6;
    }

    .small {
        display: flex;
        align-items: center;
        gap: 6px;
        height: 40px;
    }

    .field .small {
        padding: 4px 0 0 7px;
    }

    .more {
        width: 72px;
    }

    .out {
        width: 110px;
    }

    .levels {
        display: flex;
        flex-direction: column;
        gap: 33px;
        padding: 22px 0 0 9px;
    }

    .stack {
        flex-direction: column;
        align-items: flex-start;
        padding-left: 21px;
    }

    .g-data .content {
        padding-left: 13px;
    }

    .g-data .big {
        width: 120px;
    }

    .g-data .source {
        width: 160px;
    }

    .source span {
        line-height: 27px;
    }

    .source .chevron {
        display: inline-block;
        margin: 0;
        vertical-align: middle;
    }

    .g-calc .small {
        align-self: flex-end;
        padding-right: 28px;
    }

    .g-calc .relations {
        align-self: flex-start;
        margin-top: 40px;
        padding: 0;
    }

    .g-show .stack {
        padding-left: 14px;
    }

    .g-show .small {
        width: 201px;
        padding-left: 8px;
    }

    .g-show .pressed {
        border: 3px solid #555;
        padding-left: 5px;
        background: #919191;
    }

    .pressed span {
        flex: 1;
        text-align: left;
    }

    .pressed .chevron {
        margin-right: 8px;
    }

    .collapse {
        align-self: flex-end;
        margin-left: auto;
        padding-right: 14px;
    }

    /* formula bar */
    .formula-bar {
        display: flex;
        flex: none;
        align-items: center;
        height: 74px;
        padding: 0 9px 0 8px;
        color: #444;
    }

    .name-box,
    .formula-tools,
    .formula {
        display: flex;
        align-items: center;
        height: 40px;
        border: 1px solid #444;
        background: #b1b1b1;
    }

    .name-box {
        width: 177px;
        padding: 0 12px 0 6px;
    }

    .name-box input {
        flex: 1;
        min-width: 0;
        font-size: 23px;
    }

    .formula-bar .dots {
        margin: 0 25px 0 23px;
    }

    .formula-tools {
        justify-content: space-between;
        width: 191px;
        padding: 0 24px 0 22px;
    }

    .fx {
        font: italic 700 24px/30px "Liberation Serif", serif;
    }

    .formula {
        flex: 1;
        margin-left: 5px;
        padding-right: 9px;
    }

    .formula input {
        flex: 1;
    }

    /* worksheet */
    main {
        display: flex;
        flex: 1;
        min-height: 0;
    }

    .sheet {
        display: flex;
        flex: 1;
        flex-direction: column;
        min-width: 0;
        overflow: hidden;
    }

    .column-heads {
        display: flex;
        flex: none;
        height: 33px;
        border-bottom: 1px solid #bbb;
    }

    .corner,
    .column-head {
        flex: none;
        border-right: 1px solid #bbb;
        text-align: center;
        line-height: 33px;
    }

    .corner {
        width: 48px;
        padding: 4px 0 0 18px;
    }

    .cells {
        position: relative;
        flex: 1;
        overflow: hidden;
        background: #fff;
    }

    table {
        width: 1218px;
        border-collapse: collapse;
        table-layout: fixed;
        color: #000;
    }

    .row-col {
        width: 48px;
    }

    th,
    td {
        height: 34px;
        padding: 0;
        border: 1px solid #d4d4d4;
        line-height: 28px;
    }

    th {
        border-color: #bbb;
        background: #666;
        color: #fff;
        font-weight: 400;
    }

    td {
        padding-right: 49px;
        font-size: 22px;
        text-align: right;
    }

    .last td {
        border-bottom-color: #000;
    }

    .total td {
        padding-right: 56px;
        border-top-color: #000;
        border-bottom: 2px solid #777;
        font-weight: 700;
    }

    .chart {
        position: absolute;
        top: 0;
        left: 184px;
        color: #111;
    }

    .chart text {
        fill: #595959;
        font-family: Lato, "Open Sans", sans-serif;
    }

    .chart .tick {
        font-size: 19px;
    }

    .chart .negative {
        fill: #e00000;
    }

    .chart .chart-title {
        font-size: 30px;
        font-weight: 700;
    }

    .chart .axis {
        font-size: 22px;
    }

    .pill {
        position: absolute;
        display: flex;
        align-items: center;
        justify-content: space-between;
        height: 31px;
        padding: 0 8px 0 4px;
        background: linear-gradient(#dedede, #c2c2c2);
        font-size: 18px;
    }

    .product { top: 12px; left: 21px; width: 101px; }
    .year { top: 12px; left: 123px; width: 93px; padding-right: 6px; }
    .profit { top: 58px; left: 31px; width: 135px; }
    .month { top: 746px; left: 31px; width: 160px; }
    .segment { top: 335px; left: 872px; width: 110px; }

    .caret {
        border: 5px solid transparent;
        border-top-color: #333;
        border-bottom: 0;
    }

    .year .caret {
        margin: 8px -8px 0 8px;
    }

    /* format pane */
    aside {
        display: flex;
        flex: none;
        flex-direction: column;
        width: 500px;
        padding: 12px 3px 4px 15px;
    }

    .pane-title {
        display: flex;
        align-items: center;
        height: 50px;
        padding-right: 23px;
    }

    .pane-title h1 {
        width: 360px;
        margin-right: 4px;
        overflow: hidden;
        font-size: 36px;
        font-weight: 300;
        line-height: 50px;
        text-overflow: ellipsis;
        white-space: nowrap;
    }

    .pane-title button:last-child {
        margin-left: auto;
    }

    .pane-tabs {
        display: flex;
        height: 32px;
        margin-top: 18px;
        padding-left: 10px;
    }

    .pane-tabs .chosen {
        display: flex;
        align-items: center;
        gap: 16px;
        width: 244px;
        border-right: 1px solid #ddd;
        margin-right: 8px;
        font-weight: 700;
    }

    .pane-icons {
        display: flex;
        align-items: center;
        gap: 26px;
        height: 98px;
        margin-right: 15px;
        padding: 0 0 10px 10px;
        border-bottom: 2px solid #b1b1b1;
    }

    .pane-icons .selected {
        width: 54px;
        height: 56px;
        margin-right: -8px;
        border: 2px solid #bbb;
        background: #444;
    }

    .section {
        height: 49px;
        padding: 8px 0 0 44px;
        text-align: left;
        font-weight: 700;
    }

    .blank {
        height: 284px;
        margin: auto 0 0 -15px;
        background: #171717;
    }

    /* sheet tabs */
    .sheet-tabs {
        display: flex;
        flex: none;
        align-items: flex-start;
        height: 38px;
        border-top: 1px solid #808080;
        border-bottom: 2px solid #444;
    }

    .arrows {
        display: flex;
        gap: 28px;
        width: 127px;
        padding: 12px 0 0 32px;
    }

    .arrows button {
        height: 12px;
    }

    .sheet-tab {
        height: 32px;
        padding: 0 12px 2px 13px;
        border-right: 1px solid #999;
        font-size: 22px;
    }

    .first {
        border-left: 1px solid #999;
    }

    .open {
        border: 0;
        border-bottom: 3px solid #217346;
        background: #fff;
        color: #217346;
        font-weight: 700;
    }

    .add {
        margin: 5px 0 0 43px;
    }

    .sheet-tabs .dots {
        margin: 9px 0 0 154px;
    }

    .scrollbar {
        display: flex;
        flex: 1;
        gap: 14px;
        height: 28px;
        margin: 4px 490px 0 19px;
        background: #444;
    }

    .scrollbar button {
        display: grid;
        place-items: center;
        width: 28px;
        border: 2px solid #808080;
        background: #d0d0d0;
    }

    .thumb {
        width: 98px;
        border: 2px solid #808080;
        background: #d0d0d0;
    }

    /* status bar */
    footer {
        display: flex;
        flex: none;
        align-items: center;
        height: 37px;
        padding: 0 13px 0 19px;
        font-size: 18px;
    }

    .ready {
        width: 97px;
    }

    footer b {
        margin-left: 5px;
    }

    .views {
        display: flex;
        align-items: center;
        margin-left: auto;
    }

    .views button:nth-child(2) {
        margin: 0 33px 0 44px;
    }

    input[type="range"] {
        width: 174px;
        height: 20px;
        margin: 0 10px;
        appearance: none;
        background: linear-gradient(#fff, #fff) center / 100% 2px no-repeat;
    }

    input[type="range"]::-webkit-slider-thumb {
        appearance: none;
        width: 9px;
        height: 20px;
        background: #fff;
    }

    .percent {
        width: 68px;
        text-align: right;
    }

    /* floating toolbar */
    .mini-toolbar {
        position: absolute;
        top: 109px;
        left: 1084px;
        display: flex;
        width: 375px;
        height: 115px;
        padding: 12px 0 0 12px;
        border: 2px solid #c6c6c6;
        background: #f0f0f0;
        color: #262626;
        font-size: 19px;
    }

    .mini-toolbar button {
        display: flex;
        flex-direction: column;
        align-items: center;
        gap: 13px;
        width: 84px;
        margin-right: 5px;
    }

    .tool {
        display: flex;
        gap: 2px;
        margin-left: 14px;
    }

    .tool .chevron {
        margin-top: 16px;
    }

    .picker {
        position: relative;
        width: 177px;
        height: 42px;
        margin-top: 22px;
        border: 2px solid #777;
        background: #fff;
    }

    .picker select {
        width: 100%;
        height: 100%;
        padding-left: 3px;
        appearance: none;
    }

    .picker svg {
        position: absolute;
        top: 14px;
        right: 6px;
        pointer-events: none;
    }

    /* context menu */
    .context-menu {
        position: absolute;
        top: 251px;
        left: 1084px;
        display: flex;
        flex-direction: column;
        width: 393px;
        padding: 8px 2px 2px;
        border: 2px solid #808080;
        background: #f0f0f0;
        color: #262626;
    }

    .context-menu input {
        height: 42px;
        margin: 0 6px 7px 7px;
        padding: 0 10px 6px;
        border: 2px solid #929292;
        background: #fff;
        font-size: 18px;
    }

    .context-menu input::placeholder {
        color: #666;
        opacity: 1;
    }

    .item {
        display: flex;
        align-items: center;
        height: 44px;
        padding: 4px 0 0 8px;
    }

    .item:disabled {
        color: #b0b0b0;
    }

    .item-icon {
        width: 46px;
        padding-bottom: 6px;
    }

    .active {
        background: #d0d0d0;
    }

    u {
        text-decoration-thickness: 1px;
        text-underline-offset: 3px;
    }

    .pointer {
        width: 24px;
        height: 24px;
        margin: 0 0 6px 14px;
        border-radius: 50%;
        background: #cc9257;
    }

    .submenu {
        display: flex;
        align-items: center;
        height: 22px;
        margin: 0 16px 6px auto;
        color: #b0b0b0;
    }

    .split {
        padding-left: 16px;
        border-left: 2px solid #d0d0d0;
    }

    .split svg {
        color: #222;
    }

    hr {
        width: 329px;
        height: 2px;
        margin: 0 0 2px auto;
        border: 0;
        background: #d0d0d0;
    }

    .menu-header {
        display: flex;
        align-items: center;
        height: 42px;
        padding-left: 8px;
        background: linear-gradient(#dfdfdf, #dfdfdf) right / 344px 100% no-repeat;
        color: #666;
    }

    .menu-header b {
        margin-left: 24px;
    }

    .paste {
        height: 51px;
        padding: 0 0 0 52px;
    }
</style>
